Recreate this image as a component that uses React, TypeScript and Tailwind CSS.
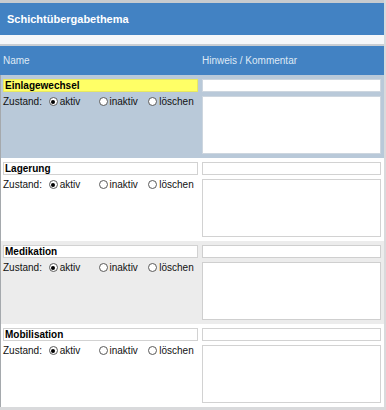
import React from "react";

const font = { fontFamily: '"Liberation Sans", Arial, sans-serif' };

function Radio({ checked, label }: { checked?: boolean; label: string }) {
  return (
    <div className="flex w-[50px] items-center">
      <span className="flex h-[9px] w-[9px] shrink-0 items-center justify-center rounded-full border border-[#5a5a5a] bg-white">
        {checked && <span className="h-[4px] w-[4px] rounded-full bg-black" />}
      </span>
      <span className="ml-[2px] leading-[12px]">{label}</span>
    </div>
  );
}

type RowProps = {
  name: string;
  bg: string;
  nameBox: string;
  inputBox: string;
};

function Row({ name, bg, nameBox, inputBox }: RowProps) {
  return (
    <div className={`flex pl-[2px] pr-[3px] pt-[4px] pb-[4px] ${bg}`}>
      <div className="w-[195px]">
        <div className={`h-[13px] pl-[1px] text-[10px] font-bold leading-[12px] text-black ${nameBox}`}>
          {name}
        </div>
        <div className="mt-[3px] flex h-[13px] items-center text-[10px] leading-[12px] text-[#111]">
          <span className="w-[46px]">Zustand:</span>
          <Radio checked label="aktiv" />
          <Radio label="inaktiv" />
          <Radio label="löschen" />
        </div>
      </div>
      <div className="ml-[4px] w-[179px]">
        <div className={`h-[13px] bg-white ${inputBox}`} />
        <div className={`mt-[4px] h-[58px] bg-white ${inputBox}`} />
      </div>
    </div>
  );
}

export default function App() {
  return (
    <div className="h-[410px] w-[386px] overflow-hidden bg-[#d9dadc]" style={font}>
      <div className="w-[384px]">
        <div className="h-[3px] bg-[#c7cbcf]" />
        <div className="flex h-[32px] items-center bg-[#4282c3] pl-[7px] text-[11px] font-bold text-white">
          Schichtübergabethema
        </div>
        <div className="h-[9px] bg-[#f5f7f9]" />
        <div className="h-[2px] bg-[#c9ced3]" />
        <div className="flex h-[29px] items-center bg-[#4282c3] text-[10px] text-[#dfe9f5]">
          <span className="w-[202px] pl-[3px]">Name</span>
          <span>Hinweis / Kommentar</span>
        </div>
        <div className="border-l border-[#a5a9ad]">
          <Row
            name="Einlagewechsel"
            bg="bg-[#b9c9d9]"
            nameBox="bg-[#ffff66] border border-[#e8e860]"
            inputBox="border border-[#cdd6df]"
          />
          <Row
            name="Lagerung"
            bg="bg-white"
            nameBox="bg-white border border-[#d2d2d2]"
            inputBox="border border-[#d2d2d2]"
          />
          <Row
            name="Medikation"
            bg="bg-[#ececec]"
            nameBox="bg-white border border-[#d2d2d2]"
            inputBox="border border-[#cfcfcf]"
          />
          <Row
            name="Mobilisation"
            bg="bg-white"
            nameBox="bg-white border border-[#d2d2d2]"
            inputBox="border border-[#d2d2d2]"
          />
        </div>
      </div>
    </div>
  );
}
